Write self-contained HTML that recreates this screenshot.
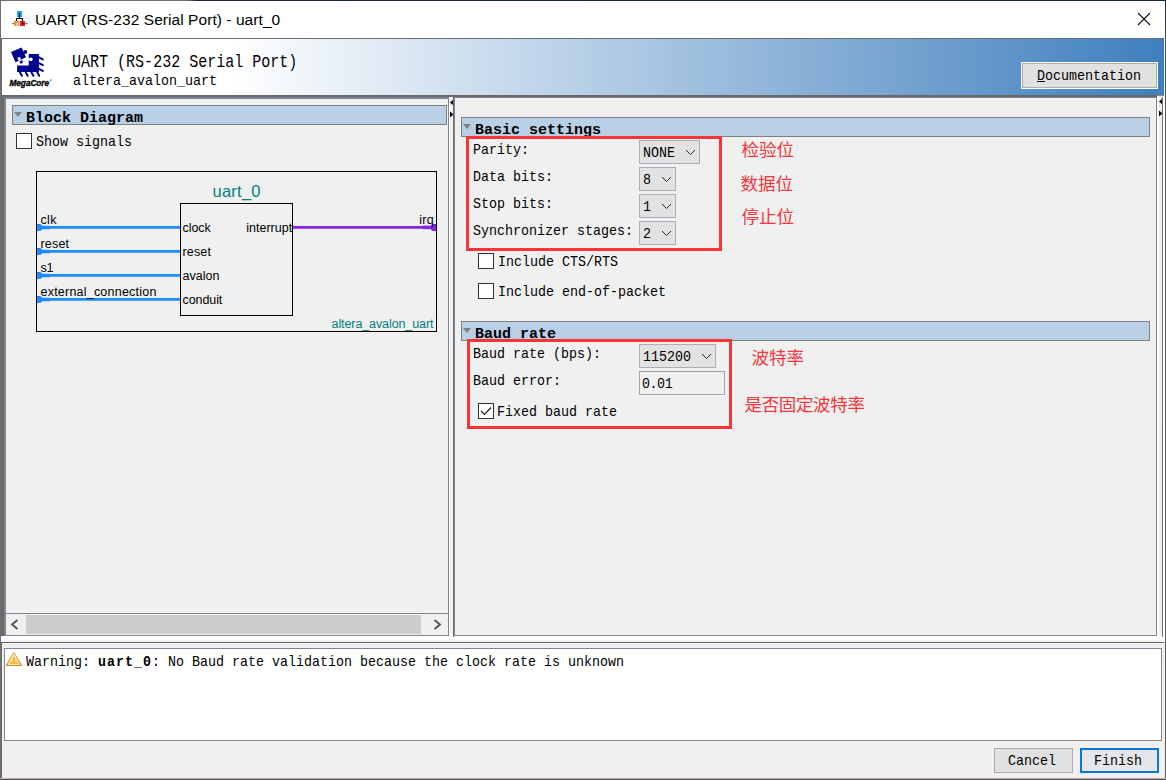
<!DOCTYPE html>
<html lang="zh">
<head>
<meta charset="utf-8">
<title>UART (RS-232 Serial Port) - uart_0</title>
<style>
*{box-sizing:border-box;margin:0;padding:0}
html,body{width:1166px;height:780px;overflow:hidden;background:#f0f0f0}
body{position:relative;font-family:"Liberation Mono","Noto Sans CJK SC",monospace;color:#000}
.a{position:absolute}
/* SimSun-like condensed mono text: 8px advance, tall glyphs */
.t{position:absolute;white-space:nowrap;font-family:"Liberation Mono","Noto Sans CJK SC",monospace;font-size:15px;line-height:20px;height:21px;padding-top:1px;transform:scaleX(.8887);transform-origin:0 50%;color:#000}
.tb{position:absolute;white-space:nowrap;font-family:"Liberation Mono","Noto Sans CJK SC",monospace;font-weight:bold;font-size:15px;line-height:20px;height:21px;padding-top:1px;transform:scaleX(.9998);transform-origin:0 50%;color:#000}
.s{position:absolute;white-space:nowrap;font-family:"Liberation Sans","Noto Sans CJK SC",sans-serif;font-size:12.500px;line-height:14px;height:14px;color:#000}
.cn{position:absolute;white-space:nowrap;font-family:"Liberation Sans","Noto Sans CJK SC",sans-serif;font-size:17.500px;line-height:20px;height:20px;color:#f5363a}
.bar{position:absolute;height:20px;background:#b8cfe5;border:1px solid #808080}
.tri{position:absolute;width:0;height:0;border-left:4px solid transparent;border-right:4px solid transparent;border-top:5px solid #808080}
.combo{position:absolute;height:24px;background:#e2e2e2;border:1px solid #a9aeb8}
.cb{position:absolute;width:16px;height:16px;background:#fff;border:1px solid #333}
.red{position:absolute;border:3px solid #f93336}
.btn{position:absolute;background:#e1e1e1;border:1px solid #adadad}
</style>
</head>
<body>

<!-- ===== window frame ===== -->
<div class="a" style="left:0;top:0;width:1166px;height:780px;background:#f0f0f0"></div>

<!-- title bar -->
<div class="a" id="titlebar" style="left:1px;top:1px;width:1163px;height:37px;background:#fff"></div>
<div class="a" style="left:1px;top:38px;width:1163px;height:1px;background:#6d6d6d"></div>

<!-- header gradient -->
<div class="a" id="header" style="left:2px;top:39px;width:1162px;height:56px;background:linear-gradient(90deg,#fff 0,#fff 230px,#3f7fbe 100%)"></div>


<!-- ===== title bar content ===== -->
<svg class="a" style="left:10px;top:8px" width="20" height="20" viewBox="10 8 20 20">
  <rect x="17" y="11" width="5" height="6" fill="#1ca8f0"/>
  <path d="M19.500 13V18.500M16.500 21V18.500H22.500V23" fill="none" stroke="#111" stroke-width="1.2"/>
  <path d="M12 23.500H14M25 23.500H27.500" stroke="#808080" stroke-width="1"/>
  <path d="M26.500 22.300L28 23.500L26.500 24.700Z" fill="#808080"/>
  <rect x="14" y="21" width="5" height="5" fill="#f5861f"/>
  <path d="M16.300 22.500V26M17.900 22.500V26" stroke="#ffe3c0" stroke-width=".8"/>
  <rect x="20" y="21" width="5" height="5" fill="#ee1a2b"/>
  <path d="M22 22.200L24.400 23.600L22 25Z" fill="#111"/>
</svg>
<div class="a" id="title" style="left:35px;top:9.500px;letter-spacing:.06px;font-family:'Liberation Sans','Noto Sans CJK SC',sans-serif;font-size:15.500px;line-height:20px;white-space:nowrap;color:#000">UART (RS-232 Serial Port) - uart_0</div>
<svg class="a" style="left:1137px;top:12px" width="14" height="14" viewBox="0 0 14 14"><path d="M1 1L13 13M13 1L1 13" stroke="#111" stroke-width="1.1" fill="none"/></svg>

<!-- ===== header content ===== -->
<svg class="a" style="left:4px;top:42px" width="56" height="38" viewBox="4 42 56 38">
  <g fill="#00008e" stroke="none">
    <path d="M28.700 53.900H38.900V72.100H17.100V65.400H28.700Z"/>
    <path d="M11 52L21.600 47.400L26 57.200L15.500 62.200Z"/>
    <circle cx="25.300" cy="52" r="1.900"/>
    <circle cx="21.200" cy="61.900" r="1.700"/>
  </g>
  <g fill="#fff">
    <circle cx="19.100" cy="58.600" r="1.500"/>
    <path d="M18.400 59.500L20.200 58.900L21 61L19.400 61.700Z"/>
    <rect x="28.200" y="58.400" width="1.800" height="2"/>
    <circle cx="30.900" cy="59.400" r="1.800"/>
  </g>
  <g fill="none" stroke="#00008e" stroke-width="2" stroke-linecap="round">
    <path d="M39 57.300L42.800 59.400M39 63.100L42.800 65.200M39 68.800L42.800 70.900"/>
    <path d="M19.900 72.200L21.900 75.800M25.700 72.200L27.700 75.800M31.400 72.200L33.400 75.800M37.200 72.200L39.200 75.800"/>
  </g>
</svg>
<div class="a" id="mega" style="left:9.500px;top:75px;font-family:'Liberation Sans',sans-serif;font-weight:bold;font-style:italic;font-size:8.200px;line-height:12px;white-space:nowrap;color:#000;-webkit-text-stroke:.35px #000">MegaCore<span style="font-size:4px;vertical-align:3.500px;-webkit-text-stroke:0;color:#444">&#174;</span></div>

<div class="t" id="h1" style="left:72px;top:50px;padding-top:0;font-size:18.2px;line-height:24px;height:24px;transform:scaleX(.826)">UART (RS-232 Serial Port)</div>
<div class="t" id="h2" style="left:72.500px;top:71px">altera_avalon_uart</div>

<!-- Documentation button -->
<div class="a" style="left:1021px;top:62px;width:137px;height:27px;background:#fff"></div>
<div class="btn" style="left:1022px;top:63px;width:135px;height:25px"></div>
<div class="t" id="doc" style="left:1037px;top:66px"><span style="text-decoration:underline">D</span>ocumentation</div>


<!-- ===== split pane frame ===== -->
<div class="a" style="left:1px;top:95px;width:1156px;height:2px;background:#696969"></div>
<div class="a" style="left:1157px;top:95px;width:7px;height:1px;background:#8b8b8b"></div>
<div class="a" style="left:1px;top:97px;width:3px;height:545px;background:#686868"></div>
<!-- left panel -->
<div class="a" id="leftpanel" style="left:4px;top:97px;width:445px;height:539px;border:1px solid #7d8594;border-left-width:2px;border-top-width:2px;background:#f0f0f0"></div>
<!-- divider -->
<div class="a" style="left:449px;top:97px;width:4px;height:539px;background:#f2f2f2"></div>
<div class="a" style="left:449px;top:97px;width:1px;height:539px;background:#fff"></div>
<svg class="a" style="left:449px;top:98px" width="5" height="20" viewBox="0 0 5 20"><path d="M4.500 1.500V7.500L1 4.500ZM1 13.500V19.500L4.500 16.500Z" fill="#000"/></svg>
<!-- right panel -->
<div class="a" style="left:453px;top:97px;width:1px;height:540px;background:#6a6a6a"></div>
<div class="a" id="rightpanel" style="left:454px;top:97px;width:703px;height:539px;border:1px solid #7d8594;background:#f0f0f0"></div>
<div class="a" style="left:1157px;top:97px;width:5px;height:539px;background:#f0f0f0"></div>
<div class="a" style="left:1157px;top:97px;width:2px;height:539px;background:#fff"></div>
<svg class="a" style="left:1158px;top:97px" width="5" height="20" viewBox="0 0 5 20"><path d="M4.500 1.500V7.500L1 4.500ZM1 13.500V19.500L4.500 16.500Z" fill="#000"/></svg>
<div class="a" style="left:1162px;top:97px;width:1px;height:540px;background:#707070"></div>
<!-- horizontal divider -->
<div class="a" style="left:1px;top:636px;width:1163px;height:4px;background:#fff"></div>
<div class="a" style="left:1px;top:640px;width:1163px;height:2px;background:#f4f4f4"></div>
<div class="a" style="left:453px;top:636px;width:1px;height:1px;background:#6a6a6a"></div>
<div class="a" style="left:1162px;top:636px;width:1px;height:1px;background:#707070"></div>
<div class="a" style="left:1px;top:642px;width:1163px;height:1px;background:#666"></div>
<div class="a" style="left:1px;top:643px;width:1px;height:135px;background:#686868"></div>

<!-- ===== left panel content ===== -->
<div class="bar" style="left:12px;top:105px;width:435px"></div>
<div class="tri" style="left:14px;top:112px"></div>
<div class="tb" style="left:26px;top:108px">Block Diagram</div>
<div class="cb" style="left:16px;top:133px"></div>
<div class="t" style="left:36px;top:132px">Show signals</div>

<!-- block diagram -->
<div class="a" style="left:36px;top:171px;width:401px;height:161px;border:1px solid #000"></div>
<div class="a" style="left:180px;top:203px;width:113px;height:113px;border:1px solid #000"></div>
<div class="s" style="left:212.500px;top:181px;font-size:16.500px;line-height:20px;height:20px;letter-spacing:.25px;color:#008080">uart_0</div>
<!-- connection lines -->
<svg class="a" style="left:36px;top:171px" width="402" height="162" viewBox="36 171 402 162">
  <g stroke="#1a8cff" stroke-width="2.700" fill="none">
    <path d="M37 227.400H180M37 251.400H180M37 275.400H180M37 299.400H180"/>
  </g>
  <g stroke="#1a8cff" stroke-width="3.500" fill="none">
    <path d="M37 227.400H50M37 251.400H50M37 275.400H50M37 299.400H50"/>
  </g>
  <g fill="#1a8cff">
    <path d="M37 224H40.500L42 225.500V229.500L40.500 231H37Z"/>
    <path d="M37 248H40.500L42 249.500V253.500L40.500 255H37Z"/>
    <path d="M37 272H40.500L42 273.500V277.500L40.500 279H37Z"/>
    <path d="M37 296H40.500L42 297.500V301.500L40.500 303H37Z"/>
  </g>
  <path d="M293 227.400H436" stroke="#8526e6" stroke-width="2.700" fill="none"/>
  <path d="M423 227.400H436" stroke="#8526e6" stroke-width="3.500" fill="none"/>
  <path d="M436 224H432.500L431 225.500V229.500L432.500 231H436Z" fill="#8526e6"/>
</svg>
<!-- labels -->
<div class="s" style="left:40.500px;top:213px;letter-spacing:.37px">clk</div>
<div class="s" style="left:40.500px;top:237px;letter-spacing:.2px">reset</div>
<div class="s" style="left:40.500px;top:261px;letter-spacing:-.2px">s1</div>
<div class="s" style="left:40.500px;top:285px;letter-spacing:.22px">external_connection</div>
<div class="s" style="left:182.500px;top:221px;letter-spacing:-.05px">clock</div>
<div class="s" style="left:182.500px;top:245px;letter-spacing:.17px">reset</div>
<div class="s" style="left:182.500px;top:269px;letter-spacing:0">avalon</div>
<div class="s" style="left:182.500px;top:293px;letter-spacing:-.08px">conduit</div>
<div class="s" style="left:246.300px;top:221px;letter-spacing:0">interrupt</div>
<div class="s" style="left:419.300px;top:213px;letter-spacing:.2px">irq</div>
<div class="s" style="left:331.600px;top:317px;letter-spacing:-.1px;color:#008080">altera_avalon_uart</div>

<!-- horizontal scrollbar -->
<div class="a" style="left:6px;top:613px;width:442px;height:1px;background:#7d8594"></div>
<div class="a" style="left:6px;top:614px;width:442px;height:21px;background:#f0f0f0"></div>
<div class="a" style="left:26px;top:615px;width:395px;height:19px;background:#cdcdcd"></div>
<svg class="a" style="left:10px;top:619px" width="9" height="11" viewBox="0 0 9 11"><path d="M7.500 1L2 5.500L7.500 10" fill="none" stroke="#505050" stroke-width="1.8"/></svg>
<svg class="a" style="left:433px;top:619px" width="9" height="11" viewBox="0 0 9 11"><path d="M1.500 1L7 5.500L1.500 10" fill="none" stroke="#505050" stroke-width="1.8"/></svg>


<!-- ===== right panel content ===== -->
<div class="bar" style="left:461px;top:117px;width:689px"></div>
<div class="tri" style="left:463px;top:124px"></div>
<div class="tb" style="left:475px;top:120px">Basic settings</div>

<div class="t" style="left:473px;top:140px">Parity:</div>
<div class="t" style="left:473px;top:167px">Data bits:</div>
<div class="t" style="left:473px;top:194px">Stop bits:</div>
<div class="t" style="left:473px;top:221px">Synchronizer stages:</div>

<div class="combo" style="left:639px;top:140px;width:61px"><div class="t" style="left:3px;top:2px">NONE</div><svg class="a" style="right:3px;top:8px" width="11" height="7" viewBox="0 0 11 7"><path d="M1 1L5.500 5.500L10 1" fill="none" stroke="#2a2a2a" stroke-width="1"/></svg></div>
<div class="combo" style="left:639px;top:167px;width:37px"><div class="t" style="left:3px;top:2px">8</div><svg class="a" style="right:3px;top:8px" width="11" height="7" viewBox="0 0 11 7"><path d="M1 1L5.500 5.500L10 1" fill="none" stroke="#2a2a2a" stroke-width="1"/></svg></div>
<div class="combo" style="left:639px;top:194px;width:37px"><div class="t" style="left:3px;top:2px">1</div><svg class="a" style="right:3px;top:8px" width="11" height="7" viewBox="0 0 11 7"><path d="M1 1L5.500 5.500L10 1" fill="none" stroke="#2a2a2a" stroke-width="1"/></svg></div>
<div class="combo" style="left:639px;top:221px;width:37px"><div class="t" style="left:3px;top:2px">2</div><svg class="a" style="right:3px;top:8px" width="11" height="7" viewBox="0 0 11 7"><path d="M1 1L5.500 5.500L10 1" fill="none" stroke="#2a2a2a" stroke-width="1"/></svg></div>

<div class="red" style="left:466px;top:136px;width:256px;height:115px"></div>

<div class="cb" style="left:478px;top:253px"></div>
<div class="t" style="left:498px;top:252px">Include CTS/RTS</div>
<div class="cb" style="left:478px;top:283px"></div>
<div class="t" style="left:498px;top:282px">Include end-of-packet</div>

<div class="cn" style="left:741.500px;top:140px">检验位</div>
<div class="cn" style="left:740.500px;top:174px">数据位</div>
<div class="cn" style="left:741.500px;top:207px">停止位</div>

<div class="bar" style="left:461px;top:321px;width:689px"></div>
<div class="tri" style="left:463px;top:328px"></div>
<div class="tb" style="left:475px;top:324px">Baud rate</div>

<div class="t" style="left:473px;top:344px">Baud rate (bps):</div>
<div class="t" style="left:473px;top:371px">Baud error:</div>
<div class="combo" style="left:639px;top:344px;width:77px"><div class="t" style="left:3px;top:2px">115200</div><svg class="a" style="right:3px;top:8px" width="11" height="7" viewBox="0 0 11 7"><path d="M1 1L5.500 5.500L10 1" fill="none" stroke="#2a2a2a" stroke-width="1"/></svg></div>
<div class="a" style="left:639px;top:371px;width:86px;height:24px;background:#f0f0f0;border:1px solid #a0a4ab"><div class="t" style="left:2px;top:2px;letter-spacing:-.5px">0.01</div></div>
<div class="cb" style="left:478px;top:403px"><svg class="a" style="left:1px;top:2px" width="12" height="10" viewBox="0 0 12 10"><path d="M1 5L4.500 8.500L11 1.500" fill="none" stroke="#222" stroke-width="1.2"/></svg></div>
<div class="t" style="left:497px;top:402px">Fixed baud rate</div>
<div class="red" style="left:467px;top:339px;width:265px;height:90px"></div>

<div class="cn" style="left:751.500px;top:348px">波特率</div>
<div class="cn" style="left:744.500px;top:395px;letter-spacing:-.35px">是否固定波特率</div>

<!-- ===== message area ===== -->
<div class="a" id="msg" style="left:4px;top:648px;width:1158px;height:93px;background:#fff;border:1px solid #7d8594"></div>
<svg class="a" style="left:4px;top:650px" width="22" height="18" viewBox="4 650 22 18">
  <defs><linearGradient id="wg" x1="0" y1="0" x2="0" y2="1"><stop offset="0" stop-color="#fff6b8"/><stop offset="1" stop-color="#f7bd2a"/></linearGradient>
  <linearGradient id="wo" x1="0" y1="0" x2="0" y2="1"><stop offset="0" stop-color="#f0b545"/><stop offset="1" stop-color="#d98a1c"/></linearGradient></defs>
  <path d="M13.900 652.600L21.300 665.400H6.500Z" fill="#fff" stroke="url(#wo)" stroke-width="1.200" stroke-linejoin="round"/>
  <path d="M13.900 655.200L18.900 664H8.900Z" fill="url(#wg)"/>
  <path d="M13.300 657h1.200l-.2 3.800h-.8zM13.300 661.700h1.200v1.100h-1.200z" fill="#c98d1e"/>
</svg>
<div class="t" style="left:26px;top:652px">Warning: <b style="letter-spacing:1.125px">uart_0</b>: No Baud rate validation because the clock rate is unknown</div>

<!-- ===== buttons ===== -->
<div class="btn" style="left:994px;top:748px;width:79px;height:25px"></div>
<div class="t" style="left:1008px;top:751px">Cancel</div>
<div class="btn" style="left:1080px;top:748px;width:79px;height:25px;border:2px solid #0a78d7;background:#e4e6e9"></div>
<div class="t" style="left:1094px;top:751px">Finish</div>

<div class="a" style="left:1px;top:39px;width:1px;height:56px;background:#6c6c6c"></div>
<!-- window edges -->
<div class="a" style="left:0;top:0;width:1166px;height:1px;background:linear-gradient(90deg,#6e6e6e 0,#6e6e6e 188px,#1e2940 196px,#17243f 100%)"></div>
<div class="a" style="left:0;top:1px;width:1px;height:779px;background:#707070"></div>
<div class="a" style="left:1164px;top:1px;width:1px;height:641px;background:#fff"></div>
<div class="a" style="left:1163px;top:97px;width:1px;height:545px;background:#fff"></div>
<div class="a" style="left:1165px;top:1px;width:1px;height:779px;background:linear-gradient(180deg,#1b2a4a 0,#555 40px,#5a5a5a 100%)"></div>
<div class="a" style="left:0;top:778px;width:1166px;height:1px;background:#b4b2b3"></div>
<div class="a" style="left:0;top:779px;width:1166px;height:1px;background:#5a5456"></div>

</body>
</html>
